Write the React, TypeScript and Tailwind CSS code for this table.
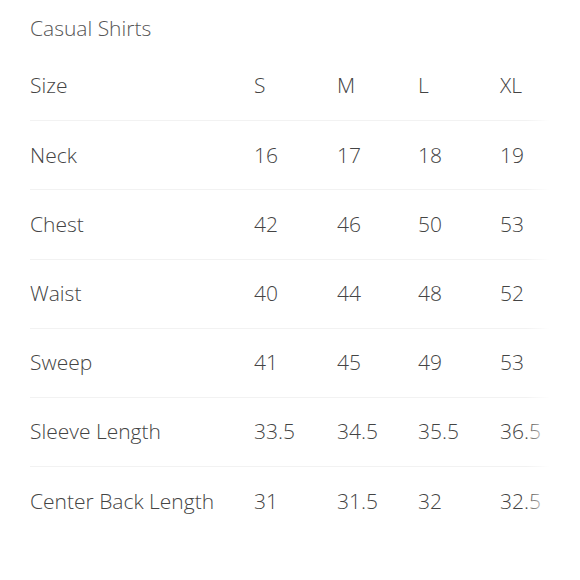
const rows: [string, string, string, string, string][] = [
  ['Size', 'S', 'M', 'L', 'XL'],
  ['Neck', '16', '17', '18', '19'],
  ['Chest', '42', '46', '50', '53'],
  ['Waist', '40', '44', '48', '52'],
  ['Sweep', '41', '45', '49', '53'],
  ['Sleeve Length', '33.5', '34.5', '35.5', '36.5'],
  ['Center Back Length', '31', '31.5', '32', '32.5'],
]

export default function App() {
  return (
    <div
      className="w-[580px] h-[580px] bg-white pl-[30px] pt-[13px] text-[#444] font-light"
      style={{ fontFamily: '"Open Sans", "Liberation Sans", sans-serif' }}
    >
      <div className="text-[21px] leading-[30px] text-[#555]">Casual Shirts</div>

      <div className="relative mt-[9px] w-[520px] overflow-hidden">
        {rows.map((r, i) => (
          <div
            key={r[0]}
            className={`flex h-[69.2px] items-center text-[21px] ${i < rows.length - 1 ? 'border-b border-[#f2f2f2]' : ''}`}
          >
            <div className="w-[224px] shrink-0">{r[0]}</div>
            <div className="w-[83px] shrink-0">{r[1]}</div>
            <div className="w-[81px] shrink-0">{r[2]}</div>
            <div className="w-[82px] shrink-0">{r[3]}</div>
            <div className="shrink-0 whitespace-nowrap">{r[4]}</div>
          </div>
        ))}
        <div className="pointer-events-none absolute right-0 top-0 bottom-0 w-[24px] bg-gradient-to-r from-white/0 to-white" />
      </div>
    </div>
  )
}
